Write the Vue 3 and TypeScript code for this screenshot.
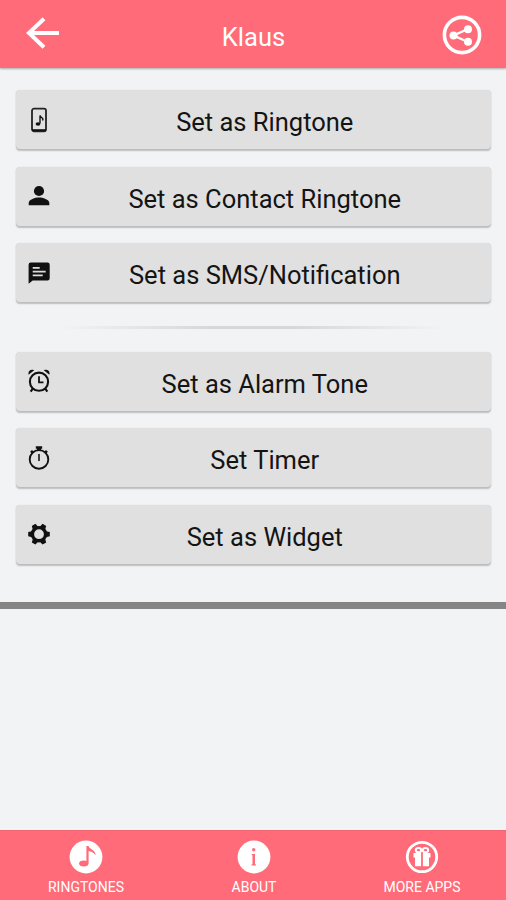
<script setup lang="ts">
type IconName = 'phone' | 'person' | 'message' | 'alarm' | 'timer' | 'gear'

interface Action {
  label: string
  icon: IconName
}

const groups: Action[][] = [
  [
    { label: 'Set as Ringtone', icon: 'phone' },
    { label: 'Set as Contact Ringtone', icon: 'person' },
    { label: 'Set as SMS/Notification', icon: 'message' },
  ],
  [
    { label: 'Set as Alarm Tone', icon: 'alarm' },
    { label: 'Set Timer', icon: 'timer' },
    { label: 'Set as Widget', icon: 'gear' },
  ],
]

const tabs = ['RINGTONES', 'ABOUT', 'MORE APPS']
</script>

<template>
  <div class="screen">
    <header class="bar">
      <button class="bar-btn" aria-label="Back">
        <svg class="back" viewBox="0 0 34 32" fill="none" stroke="#fff" stroke-width="4">
          <path d="M18 1.8 3 16 18 30.2M3 16H33" />
        </svg>
      </button>
      <h1>Klaus</h1>
      <button class="bar-btn" aria-label="Share">
        <svg class="share" viewBox="0 0 40 40">
          <circle cx="20" cy="20" r="17.6" fill="none" stroke="#fff" stroke-width="3.6" />
          <path d="M26 14 11.5 20.5 26 27" fill="none" stroke="#fff" stroke-width="2.4" />
          <g fill="#fff">
            <circle cx="26" cy="14.2" r="4" />
            <circle cx="11.5" cy="20.5" r="4" />
            <circle cx="26" cy="26.7" r="4" />
          </g>
        </svg>
      </button>
    </header>

    <main>
      <template v-for="(group, g) in groups" :key="g">
        <div v-if="g > 0" class="divider"></div>
        <div class="group">
          <button v-for="item in group" :key="item.label" class="action">
            <svg class="icon" viewBox="0 0 22 26">
              <template v-if="item.icon === 'phone'">
                <rect x="4" y="1.7" width="14" height="22.6" rx="2" fill="none" stroke="#222" stroke-width="1.8" />
                <path d="M4 22.2h14v1.8H4z" />
                <path d="M12 16.5V8.5q.6 1.8 2.3 2.6 1.2.9.2 2.4" fill="none" stroke="#111" stroke-width="1.4" />
                <ellipse cx="10" cy="17" rx="2.4" ry="1.7" />
              </template>
              <template v-else-if="item.icon === 'person'">
                <circle cx="11" cy="8" r="5.1" />
                <path d="M.7 22.2v-2.4c0-3.5 6.6-5.4 10.3-5.4s10.3 1.9 10.3 5.4v2.4z" />
              </template>
              <template v-else-if="item.icon === 'message'">
                <path d="M3 2.5h16.5a2.2 2.2 0 0 1 2.2 2.2v13.5a2.2 2.2 0 0 1-2.2 2.2H4.7L.6 23.8V4.8A2.3 2.3 0 0 1 3 2.5z" />
                <path d="M4.7 7.8h7M4.7 11.7h13M4.7 15.4h10" stroke="#ddd" stroke-width="1.8" />
              </template>
              <template v-else-if="item.icon === 'alarm'">
                <g fill="none" stroke="#111">
                  <circle cx="11" cy="13.7" r="9.1" stroke-width="2.1" />
                  <path d="M11 8.3v6h4.5" stroke-width="1.8" />
                  <path d="M4.8 20.5 2.7 23.7M17.2 20.5l2.1 3.2" stroke-width="2.2" />
                </g>
                <path d="M.6 6.7C-.2 3 2.6.9 6.2 2.3zM21.4 6.7c.8-3.7-2-5.8-5.6-4.4z" />
              </template>
              <template v-else-if="item.icon === 'timer'">
                <circle cx="11" cy="14.4" r="9.3" fill="none" stroke="#111" stroke-width="1.9" />
                <path d="M7.8 1.3h6.4v2.4h-1.2v2H9v-2H7.8z" />
                <path d="M2.1 6.8 4 5l2.2 2.2-1.9 1.9zM19.9 6.8 18 5l-2.2 2.2 1.9 1.9z" />
                <path d="M11 9v7" stroke="#222" stroke-width="1.7" />
              </template>
              <template v-else>
                <circle cx="11" cy="13.2" r="6.6" fill="none" stroke="#111" stroke-width="3.4" />
                <g fill="#111">
                  <path
                    v-for="n in 6"
                    :key="n"
                    d="M8 6.3 8.9 2.4h4.2l.9 3.9z"
                    :transform="`rotate(${n * 60 + 30} 11 13.2)`"
                  />
                </g>
              </template>
            </svg>
            <span class="label">{{ item.label }}</span>
          </button>
        </div>
      </template>
    </main>

    <div class="band"></div>

    <nav class="tabs">
      <a v-for="(tab, i) in tabs" :key="tab" class="tab">
        <svg class="tab-icon" viewBox="0 0 34 34">
          <template v-if="i === 0">
            <circle cx="17" cy="17" r="16.4" fill="#fff" />
            <path d="M17.4 6h2.2c.4 3.3 6.6 3.4 7.1 9.2-2-2.8-4.5-3.8-7.1-4.2v12.2h-2.2z" fill="#ff6b78" />
            <ellipse cx="14.8" cy="23.6" rx="4.7" ry="3" fill="#ff6b78" />
          </template>
          <template v-else-if="i === 1">
            <circle cx="17" cy="17" r="16.4" fill="#fff" />
            <circle cx="16.7" cy="9.8" r="1.7" fill="#ff6b78" />
            <path d="M14.8 14h3.2v10.2h.9v1.2h-4.3v-1.2h.9V15.2h-.7z" fill="#ff6b78" />
          </template>
          <template v-else>
            <circle cx="17" cy="17" r="14.7" fill="none" stroke="#fff" stroke-width="2.8" />
            <g fill="none" stroke="#fff" stroke-width="2">
              <ellipse cx="13.5" cy="10.2" rx="2.7" ry="2.1" />
              <ellipse cx="20.5" cy="10.2" rx="2.7" ry="2.1" />
            </g>
            <path d="M8.5 13h7.6v13.2H10v-8.6H8.5zM17.9 13h7.6v4.6H24v8.6h-6.1z" fill="#fff" />
          </template>
        </svg>
        <span>{{ tab }}</span>
      </a>
    </nav>
  </div>
</template>

<style>
body {
  margin: 0;
}
</style>

<style scoped>
.screen {
  display: flex;
  flex-direction: column;
  width: 506px;
  height: 900px;
  overflow: hidden;
  background: #f1f3f5;
  font-family: Roboto, "Liberation Sans", sans-serif;
}
button {
  border: 0;
  padding: 0;
  margin: 0;
  background: none;
  font: inherit;
}
svg {
  display: block;
}
.bar {
  flex: none;
  display: grid;
  grid-template-columns: 64px 1fr 64px;
  height: 68px;
  box-sizing: border-box;
  padding: 0 12px;
  background: #ff6b78;
  box-shadow: 0 1px 2px rgba(0, 0, 0, 0.3);
}
.bar-btn {
  display: flex;
  align-items: flex-start;
}
.back {
  width: 34px;
  height: 32px;
  margin: 17px 0 0 14px;
}
.share {
  width: 40px;
  height: 40px;
  margin: 15px 0 0 12px;
}
h1 {
  margin: 0;
  padding: 7px 0 0 1px;
  color: #fff;
  font-size: 25.5px;
  font-weight: 400;
  line-height: 60px;
  text-align: center;
}
main {
  padding: 22px 15px 0 16px;
}
.group {
  display: grid;
  gap: 17.6px;
}
.action {
  display: grid;
  grid-template-columns: 22px 1fr;
  align-items: center;
  width: 100%;
  height: 59px;
  padding: 0 11px 0 11.5px;
  border-radius: 4px;
  background: #e0e0e0;
  box-shadow: 0 1.5px 1.5px rgba(0, 0, 0, 0.22), 0 0 1px rgba(0, 0, 0, 0.12);
  color: #141414;
}
.icon {
  width: 22px;
  height: 26px;
  fill: #111;
}
.label {
  padding-top: 5px;
  font-size: 25.5px;
  line-height: 30px;
}
.divider {
  height: 3px;
  margin: 23.5px 44px 23px;
  background: linear-gradient(90deg, transparent, #d5d7d8 40%, #d5d7d8 60%, transparent);
}
.band {
  flex: none;
  height: 6.5px;
  margin-top: 38.3px;
  background: #858585;
}
.tabs {
  display: grid;
  grid-template-columns: repeat(3, 1fr);
  height: 70px;
  margin-top: auto;
  padding-left: 2px;
  background: #ff6b78;
  box-shadow: inset 0 1px #ef6572;
}
.tab {
  display: flex;
  flex-direction: column;
  align-items: center;
  padding-top: 10px;
  color: #fff;
  font-size: 14px;
  line-height: 18px;
}
.tab-icon {
  width: 34px;
  height: 34px;
  margin-bottom: 4px;
}
</style>
